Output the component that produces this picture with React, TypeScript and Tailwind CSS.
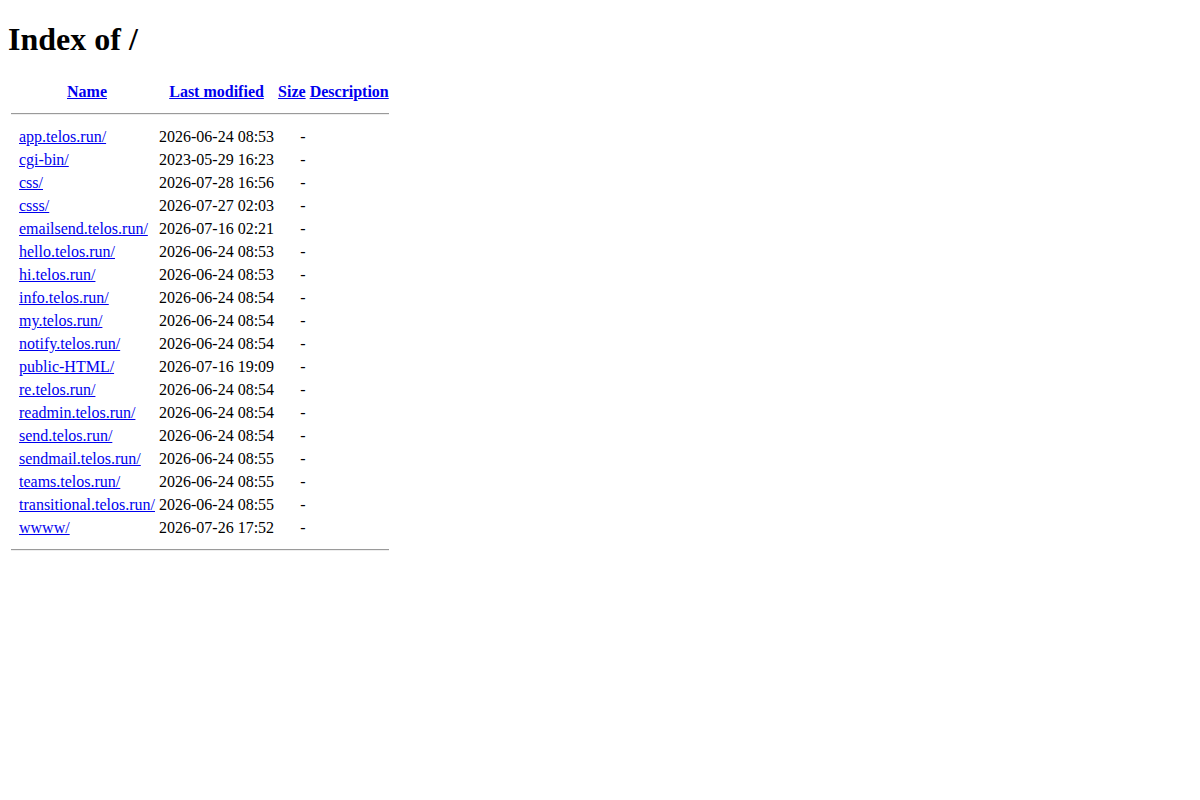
import React from "react";

const rows: [string, string][] = [
  ["app.telos.run/", "2026-06-24 08:53"],
  ["cgi-bin/", "2023-05-29 16:23"],
  ["css/", "2026-07-28 16:56"],
  ["csss/", "2026-07-27 02:03"],
  ["emailsend.telos.run/", "2026-07-16 02:21"],
  ["hello.telos.run/", "2026-06-24 08:53"],
  ["hi.telos.run/", "2026-06-24 08:53"],
  ["info.telos.run/", "2026-06-24 08:54"],
  ["my.telos.run/", "2026-06-24 08:54"],
  ["notify.telos.run/", "2026-06-24 08:54"],
  ["public-HTML/", "2026-07-16 19:09"],
  ["re.telos.run/", "2026-06-24 08:54"],
  ["readmin.telos.run/", "2026-06-24 08:54"],
  ["send.telos.run/", "2026-06-24 08:54"],
  ["sendmail.telos.run/", "2026-06-24 08:55"],
  ["teams.telos.run/", "2026-06-24 08:55"],
  ["transitional.telos.run/", "2026-06-24 08:55"],
  ["wwww/", "2026-07-26 17:52"],
];

const link = "text-[#0000ee] underline";
const cell = "p-[1px] align-middle";
const rowCell = "p-[1px] align-middle leading-[19px]";

export default function App() {
  return (
    <div className="m-2 bg-white text-black text-[16px] leading-[normal] font-['Liberation_Serif',serif]">
      <h1 className="text-[32px] font-bold my-[21.44px] leading-[normal]">Index of /</h1>
      <table className="border-separate border-spacing-[2px]">
        <tbody>
          <tr>
            <th className={`${cell} align-top font-bold text-center`}>&nbsp;</th>
            <th className={`${cell} font-bold text-center`}>
              <a href="#" className={link}>Name</a>
            </th>
            <th className={`${cell} font-bold text-center`}>
              <a href="#" className={link}>Last modified</a>
            </th>
            <th className={`${cell} font-bold text-center`}>
              <a href="#" className={link}>Size</a>
            </th>
            <th className={`${cell} font-bold text-center`}>
              <a href="#" className={link}>Description</a>
            </th>
          </tr>
          <tr>
            <th colSpan={5} className={cell}>
              <hr className="my-2 h-0 border-0 border-t border-b border-t-[#9a9a9a] border-b-[#eeeeee]" />
            </th>
          </tr>
          {rows.map(([name, date]) => (
            <tr key={name}>
              <td className={`${rowCell} align-top`}>&nbsp;</td>
              <td className={`${rowCell} whitespace-nowrap`}>
                <a href="#" className={link}>{name}</a>
              </td>
              <td className={`${rowCell} text-right whitespace-nowrap`}>{date}</td>
              <td className={`${rowCell} text-right`}>&nbsp;&nbsp;-</td>
              <td className={rowCell}>&nbsp;</td>
            </tr>
          ))}
          <tr>
            <th colSpan={5} className={cell}>
              <hr className="my-2 h-0 border-0 border-t border-b border-t-[#9a9a9a] border-b-[#eeeeee]" />
            </th>
          </tr>
        </tbody>
      </table>
    </div>
  );
}
